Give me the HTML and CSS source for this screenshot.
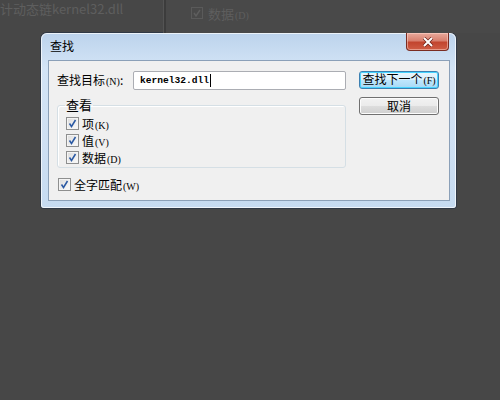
FILE: index.html
```html
<!DOCTYPE html>
<html lang="zh-CN">
<head>
    <meta charset="UTF-8">
    <title>查找</title>
    <link rel="stylesheet" href="styles.css">
</head>
<body>
    <div class="backdrop">
        <div class="bg-left">计动态链kernel32.dll</div>
        <div class="bg-divider"></div>
        <div class="bg-right">
            <span class="bg-box">
                <svg width="10" height="10" viewBox="0 0 10 10"><path d="M2 5 L4 8 L8 2" fill="none" stroke="#5e5e5e" stroke-width="1.4"/></svg>
            </span>
            <span>数据<span class="acc">(D)</span></span>
        </div>
    </div>

    <div class="dialog">
        <div class="titlebar">
            <span class="title">查找</span>
            <button class="closeButton">
                <svg width="12" height="10" viewBox="0 0 12 10"><path d="M2 1 L10 9 M10 1 L2 9" stroke="#6b2018" stroke-width="3.4"/><path d="M2 1 L10 9 M10 1 L2 9" stroke="#ffffff" stroke-width="2"/></svg>
            </button>
        </div>
        <div class="client">
            <div class="mainColumn">
                <div class="findRow">
                    <span class="findLabel">查找目标<span class="acc">(N)</span>:</span>
                    <div class="findInput">kernel32.dll<span class="caret"></span></div>
                </div>

                <fieldset class="groupBox">
                    <legend>查看</legend>
                    <div class="checkRow">
                        <span class="checkBox"><svg width="9" height="9" viewBox="0 0 9 9"><path d="M1.5 4.5 L3.5 7.5 L7.5 1" fill="none" stroke="#2a59a3" stroke-width="1.5"/></svg></span>
                        <span>项<span class="acc">(K)</span></span>
                    </div>
                    <div class="checkRow">
                        <span class="checkBox"><svg width="9" height="9" viewBox="0 0 9 9"><path d="M1.5 4.5 L3.5 7.5 L7.5 1" fill="none" stroke="#2a59a3" stroke-width="1.5"/></svg></span>
                        <span>值<span class="acc">(V)</span></span>
                    </div>
                    <div class="checkRow">
                        <span class="checkBox"><svg width="9" height="9" viewBox="0 0 9 9"><path d="M1.5 4.5 L3.5 7.5 L7.5 1" fill="none" stroke="#2a59a3" stroke-width="1.5"/></svg></span>
                        <span>数据<span class="acc">(D)</span></span>
                    </div>
                </fieldset>

                <div class="checkRow wholeWord">
                    <span class="checkBox"><svg width="9" height="9" viewBox="0 0 9 9"><path d="M1.5 4.5 L3.5 7.5 L7.5 1" fill="none" stroke="#2a59a3" stroke-width="1.5"/></svg></span>
                    <span>全字匹配<span class="acc">(W)</span></span>
                </div>
            </div>

            <div class="buttonColumn">
                <button class="dlgButton default">查找下一个<span class="acc">(F)</span></button>
                <button class="dlgButton">取消</button>
            </div>
        </div>
    </div>
</body>
</html>
```

FILE: styles.css
```css
body {
    margin: 0;
    padding: 0;
    background: #474747;
    font-family: "Noto Sans CJK SC", "Liberation Sans", sans-serif;
    font-size: 12px;
    color: #000;
    overflow: hidden;
    height: 400px;
}

.acc {
    font-family: "Liberation Serif", serif;
    font-size: 10px;
    margin-left: 1px;
}

/* window behind the dialog */
.backdrop {
    height: 33px;
    display: flex;
    color: #5e5e5e;
}

.bg-left {
    width: 163px;
    padding-top: 1px;
    font-size: 13px;
    line-height: 16px;
    white-space: nowrap;
}

.bg-divider {
    width: 2px;
    background: #3c3c3c;
    border-left: 1px solid #545454;
}

.bg-right {
    display: flex;
    align-items: flex-start;
    gap: 5px;
    padding-left: 25px;
    padding-top: 6px;
    font-size: 13px;
    line-height: 15px;
    background: #494949;
    flex: 1;
}

.bg-box {
    width: 10px;
    height: 10px;
    border: 1px solid #5a5a5a;
    margin-top: 1px;
    display: flex;
    align-items: center;
    justify-content: center;
}

/* the find dialog */
.dialog {
    width: 402px;
    margin-left: 41px;
    padding: 0 6px 7px 7px;
    background: linear-gradient(to bottom, #bcd3ec 0%, #d3e4f6 20%, #cfe0f3 60%, #c6dbf1 100%);
    border-radius: 6px 6px 3px 3px;
    box-shadow: 0 0 0 1px rgba(30, 45, 70, 0.55), inset 0 0 0 1px rgba(255, 255, 255, 0.7);
}

.titlebar {
    height: 27px;
    display: flex;
    align-items: flex-start;
    justify-content: space-between;
}

.title {
    margin-top: 5px;
    margin-left: 2px;
    line-height: 16px;
}

.closeButton {
    width: 43px;
    height: 18px;
    margin-right: 1px;
    padding: 0;
    border: 1px solid #7a2c22;
    border-top: none;
    border-radius: 0 0 4px 4px;
    background: linear-gradient(to bottom, #e9a99c 0%, #d8806f 45%, #c2452f 55%, #cf5d45 100%);
    display: flex;
    align-items: center;
    justify-content: center;
    box-shadow: inset 0 0 0 1px rgba(255, 220, 210, 0.5);
}

.client {
    height: 139px;
    display: flex;
    gap: 13px;
    padding-left: 8px;
    background: #f0f0f0;
    border: 1px solid #8ba0b8;
}

.mainColumn {
    width: 289px;
    display: flex;
    flex-direction: column;
}

.findRow {
    display: flex;
    align-items: center;
    justify-content: space-between;
    margin-top: 10px;
}

.findLabel {
    line-height: 16px;
}

.findInput {
    width: 205px;
    height: 17px;
    padding-left: 6px;
    background: #fff;
    border: 1px solid #abadb3;
    border-radius: 2px;
    font-family: "Liberation Mono", monospace;
    font-size: 9.6px;
    font-weight: bold;
    line-height: 17px;
    display: flex;
    align-items: center;
}

.caret {
    width: 1px;
    height: 13px;
    background: #000;
    margin-left: 1px;
}

.groupBox {
    margin: 7px 0 0 0;
    padding: 2px 0 1px 8px;
    border: 1px solid #d5dfe5;
    border-radius: 3px;
    box-shadow: inset 1px 1px 0 #fff;
}

.groupBox legend {
    padding: 0 1px;
    margin-left: -1px;
    line-height: 16px;
    font-size: 13px;
}

.checkRow {
    display: flex;
    align-items: center;
    gap: 3px;
    height: 17px;
}

.checkBox {
    width: 11px;
    height: 11px;
    border: 1px solid #8e8f8f;
    background: linear-gradient(135deg, #dcdcdc, #fbfbfb);
    box-shadow: inset 0 0 0 1px #f4f4f4;
    display: flex;
    align-items: center;
    justify-content: center;
}

.wholeWord {
    margin-top: 8px;
    margin-left: 1px;
}

.buttonColumn {
    display: flex;
    flex-direction: column;
    gap: 8px;
    padding-top: 10px;
}

.dlgButton {
    width: 80px;
    height: 18px;
    padding: 0;
    font-family: "Noto Sans CJK SC", sans-serif;
    font-size: 12px;
    line-height: 14px;
    color: #000;
    border: 1px solid #707070;
    border-radius: 3px;
    background: linear-gradient(to bottom, #f2f2f2 0%, #ebebeb 50%, #dddddd 51%, #cfcfcf 100%);
    box-shadow: inset 0 0 0 1px #fcfcfc;
}

.dlgButton.default {
    border-color: #3c7fb1;
    background: linear-gradient(to bottom, #eaf6fd 0%, #d9f0fc 50%, #bee6fd 51%, #a7d9f5 100%);
    box-shadow: inset 0 0 0 1px #48d4ff;
}
```
